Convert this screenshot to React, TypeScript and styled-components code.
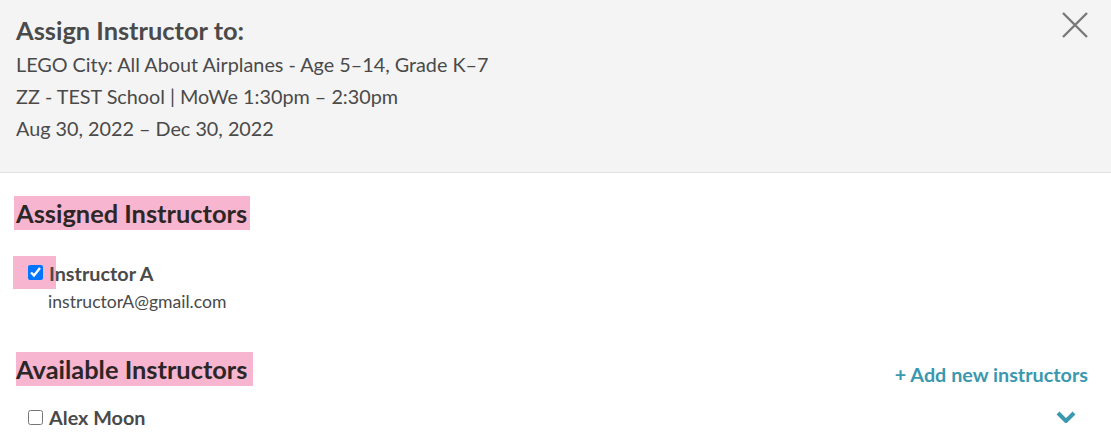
import React, { FC } from 'react';
import styled, { createGlobalStyle } from 'styled-components';

const TEXT = '#4a4a4a';
const DARK = '#2c2626';
const PINK = '#f7b5cf';
const TEAL = '#3b98ae';

const GlobalStyle = createGlobalStyle`
  body {
    margin: 0;
    background: #ffffff;
    font-family: Lato, 'Open Sans', sans-serif;
    color: ${TEXT};
  }
`;

const Header = styled.div`
  position: relative;
  box-sizing: border-box;
  height: 173px;
  padding: 15px 16px 0 16px;
  background-color: #f4f4f4;
  border-bottom: 1px solid #e2e2e2;
`;

const Title = styled.h2`
  margin: 0 0 3px 0;
  font-size: 25.4px;
  font-weight: 700;
  line-height: 30px;
  color: ${TEXT};
`;

const InfoLine = styled.div`
  font-size: 19.8px;
  line-height: 32px;
`;

const CloseButton = styled.button`
  position: absolute;
  top: 11px;
  right: 22px;
  width: 28px;
  height: 28px;
  padding: 0;
  border: none;
  background: transparent;
  cursor: pointer;
`;

const Body = styled.div`
  padding: 23px 23px 0 14px;
`;

const Section = styled.section<{ $gap?: number }>`
  margin-bottom: ${p => p.$gap || 0}px;
`;

const SectionHead = styled.div`
  display: flex;
  justify-content: space-between;
  align-items: flex-end;
`;

const TitleMark = styled.span<{ $pad: string; $shift?: number }>`
  display: inline-block;
  margin-left: ${p => p.$shift || 0}px;
  padding: ${p => p.$pad};
  background-color: ${PINK};
`;

const SectionTitle = styled.h3`
  margin: 0;
  font-size: 25.4px;
  font-weight: 700;
  line-height: 34px;
  color: ${DARK};
`;

const AddLink = styled.a`
  font-size: 19.8px;
  font-weight: 700;
  line-height: 24px;
  color: ${TEAL};
  text-decoration: none;
  cursor: pointer;
`;

const InstructorRow = styled.div<{ $top: number }>`
  display: flex;
  align-items: center;
  justify-content: space-between;
  margin-top: ${p => p.$top}px;
`;

const NameLine = styled.label`
  display: flex;
  align-items: center;
  font-size: 19.8px;
  font-weight: 700;
  line-height: 32px;
  color: ${TEXT};
`;

const CheckMark = styled.span`
  display: inline-flex;
  margin-left: -1px;
  padding: 9px 13px 9px 15px;
  background-color: ${PINK};
`;

const Check = styled.input<{ $indent?: number }>`
  width: 15px;
  height: 15px;
  margin: 0 0 0 ${p => p.$indent || 0}px;
`;

const Name = styled.span<{ $offset: number }>`
  position: relative;
  margin-left: ${p => p.$offset}px;
`;

const Email = styled.div`
  margin-left: 34px;
  font-size: 17.6px;
  line-height: 26px;
  color: ${TEXT};
`;

const Chevron = styled.svg`
  margin-right: 12px;
`;

const App: FC = () => (
  <>
    <GlobalStyle />
    <Header>
      <Title>Assign Instructor to:</Title>
      <InfoLine>LEGO City: All About Airplanes - Age 5–14, Grade K–7</InfoLine>
      <InfoLine>ZZ - TEST School | MoWe 1:30pm – 2:30pm</InfoLine>
      <InfoLine>Aug 30, 2022 – Dec 30, 2022</InfoLine>
      <CloseButton aria-label="Close">
        <svg width="28" height="28" viewBox="0 0 28 28">
          <path d="M2 2 L26 26 M26 2 L2 26" stroke="#797979" strokeWidth="2.4" fill="none" />
        </svg>
      </CloseButton>
    </Header>
    <Body>
      <Section $gap={37}>
        <SectionHead>
          <TitleMark $pad="0 3px 0 2px">
            <SectionTitle>Assigned Instructors</SectionTitle>
          </TitleMark>
        </SectionHead>
        <InstructorRow $top={26}>
          <NameLine>
            <CheckMark>
              <Check type="checkbox" defaultChecked />
            </CheckMark>
            <Name $offset={-7}>Instructor A</Name>
          </NameLine>
        </InstructorRow>
        <Email>instructorA@gmail.com</Email>
      </Section>
      <Section>
        <SectionHead>
          <TitleMark $pad="0 6px 0 0" $shift={2}>
            <SectionTitle>Available Instructors</SectionTitle>
          </TitleMark>
          <AddLink>+ Add new instructors</AddLink>
        </SectionHead>
        <InstructorRow $top={15}>
          <NameLine>
            <Check type="checkbox" $indent={14} />
            <Name $offset={6}>Alex Moon</Name>
          </NameLine>
          <Chevron width="20" height="12" viewBox="0 0 20 12">
            <path d="M2 2 L10 10 L18 2" stroke={TEAL} strokeWidth="4" fill="none" />
          </Chevron>
        </InstructorRow>
      </Section>
    </Body>
  </>
);

export default App;
